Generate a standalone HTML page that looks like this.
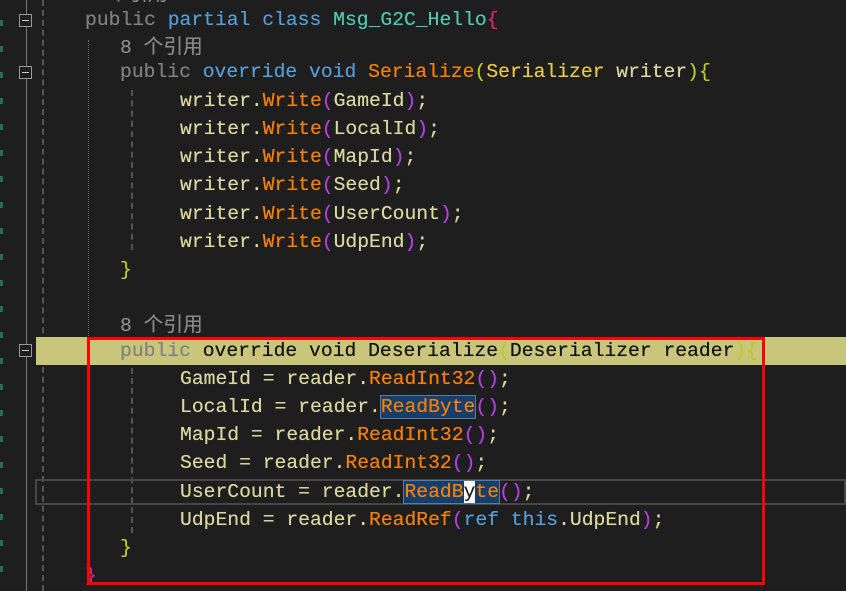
<!DOCTYPE html>
<html><head><meta charset="utf-8"><style>
body{margin:0;width:846px;height:591px;background:#1e1e1e;overflow:hidden;position:relative;font-family:"Liberation Mono","Noto Sans CJK SC",monospace;font-size:19.7px}
.l{position:absolute;white-space:pre;height:28px;line-height:28px;color:#d8d8a0;text-shadow:0 0 0.4px currentColor}
.g{color:#808080}.k{color:#569cd6}.t{color:#4ec9b0}.m{color:#ff8000}.p{color:#b040e0}.y{color:#dcdcaa}.b{color:#b5cc2a}.r{color:#e0207a}.c{color:#8a8a8a;font-family:"Liberation Mono","Noto Sans CJK SC",sans-serif}
.sel{background:#153e6a;outline:1px solid #5c7a9a}
.fold{position:absolute;left:19px;width:11px;height:11px;border:1px solid #999;background:#1e1e1e}
.fold:after{content:"";position:absolute;left:2px;top:5px;width:7px;height:1px;background:#ccc}
</style></head><body>
<div style="position:absolute;left:26px;top:0;width:1px;height:591px;background:#777"></div>
<div style="position:absolute;left:42px;top:0;height:591px;border-left:2px dashed #555"></div>
<div style="position:absolute;left:88px;top:40px;height:500px;border-left:1px dotted #666"></div>
<div style="position:absolute;left:131px;top:90px;height:160px;border-left:2px dashed #555"></div>
<div style="position:absolute;left:131px;top:368px;height:165px;border-left:2px dashed #555"></div>
<div style="position:absolute;left:0;top:0;width:3px;height:591px;background:repeating-linear-gradient(#1e1e1e 0 20px,#2a6a5a 20px 26px)"></div>
<div style="position:absolute;left:36px;top:337px;width:810px;height:28px;background:#c9c67c"></div>
<div style="position:absolute;left:35px;top:479px;width:811px;height:26px;border:2px solid #464646;box-sizing:border-box"></div>
<div class="fold" style="top:14px"></div>
<div class="fold" style="top:66px"></div>
<div class="fold" style="top:344px"></div>
<div class="l c" style="left:85px;top:-19px">8 个引用</div>
<div class="l" style="left:85px;top:6px"><span class="g">public</span> <span class="k">partial class</span> <span class="t">Msg_G2C_Hello</span><span class="r">{</span></div>
<div class="l c" style="left:120px;top:34px">8 个引用</div>
<div class="l" style="left:120px;top:58px"><span class="g">public</span> <span class="k">override void</span> <span class="m">Serialize</span><span class="b">(</span><span style="color:#e8c94a">Serializer</span> writer<span class="b">){</span></div>
<div class="l" style="left:180px;top:87px">writer.<span class="m">Write</span><span class="p">(</span>GameId<span class="p">)</span>;</div>
<div class="l" style="left:180px;top:115px">writer.<span class="m">Write</span><span class="p">(</span>LocalId<span class="p">)</span>;</div>
<div class="l" style="left:180px;top:143px">writer.<span class="m">Write</span><span class="p">(</span>MapId<span class="p">)</span>;</div>
<div class="l" style="left:180px;top:171px">writer.<span class="m">Write</span><span class="p">(</span>Seed<span class="p">)</span>;</div>
<div class="l" style="left:180px;top:200px">writer.<span class="m">Write</span><span class="p">(</span>UserCount<span class="p">)</span>;</div>
<div class="l" style="left:180px;top:228px">writer.<span class="m">Write</span><span class="p">(</span>UdpEnd<span class="p">)</span>;</div>
<div class="l b" style="left:120px;top:256px">}</div>
<div class="l c" style="left:120px;top:312px">8 个引用</div>
<div class="l" style="left:120px;top:337px;color:#111"><span class="g">public</span> override void Deserialize<span style="color:#b5cc2a">(</span>Deserializer reader<span style="color:#b5cc2a">){</span></div>
<div class="l" style="left:180px;top:365px">GameId = reader.<span class="m">ReadInt32</span><span class="p">()</span>;</div>
<div class="l" style="left:180px;top:393px">LocalId = reader.<span class="m sel">ReadByte</span><span class="p">()</span>;</div>
<div class="l" style="left:180px;top:421px">MapId = reader.<span class="m">ReadInt32</span><span class="p">()</span>;</div>
<div class="l" style="left:180px;top:449px">Seed = reader.<span class="m">ReadInt32</span><span class="p">()</span>;</div>
<div class="l" style="left:180px;top:478px">UserCount = reader.<span class="m sel">ReadB<span style="background:#fff;color:#1e1e1e">y</span>te</span><span class="p">()</span>;</div>
<div class="l" style="left:180px;top:506px">UdpEnd = reader.<span class="m">ReadRef</span><span class="p">(</span><span class="k">ref this</span>.UdpEnd<span class="p">)</span>;</div>
<div class="l b" style="left:120px;top:534px">}</div>
<div class="l r" style="left:85px;top:562px">}</div>
<div style="position:absolute;left:87px;top:337px;width:678px;height:248px;border:3px solid #f00;box-sizing:border-box"></div>
</body></html>
